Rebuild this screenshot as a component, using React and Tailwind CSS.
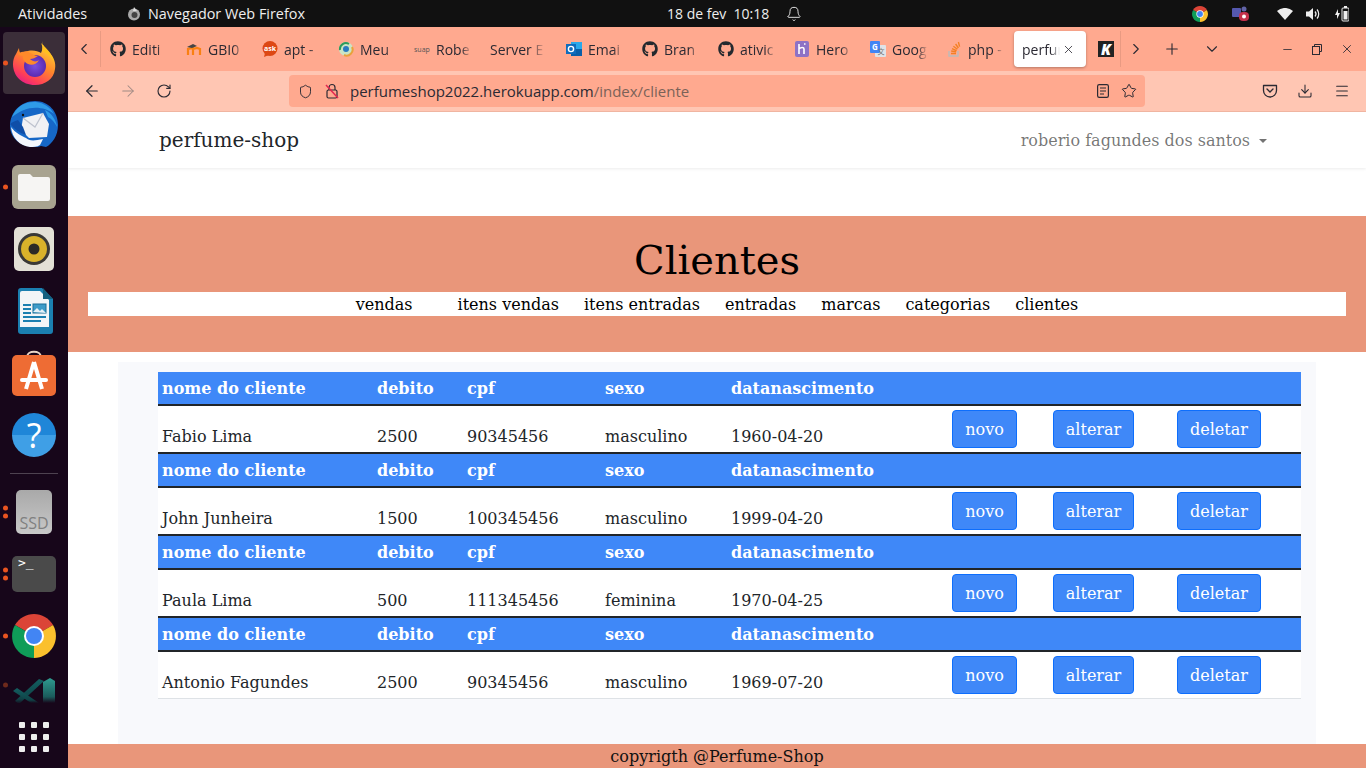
import React from "react";
import { FaGithub } from "react-icons/fa";
import { X, Plus, ChevronLeft, ChevronRight, ChevronDown, Minus, ArrowLeft, ArrowRight, RotateCw, Shield, Star, Download, Menu, Bell } from "lucide-react";

const Gh = () => <FaGithub size={16} className="text-[#24292e] shrink-0" />;
const Moodle = () => (
  <svg width="16" height="16" viewBox="0 0 16 16" className="shrink-0"><path d="M2 14V8l5-1v7M7 14V8l4-1 3 1v6" fill="none" stroke="#f98012" strokeWidth="2.2"/><path d="M1 6l6-3 4 2-5 2z" fill="#444"/></svg>
);
const Ask = () => (
  <svg width="16" height="16" viewBox="0 0 16 16" className="shrink-0"><circle cx="8" cy="7.5" r="7.5" fill="#dd4814"/><path d="M3 12l-1 4 5-2z" fill="#dd4814"/><text x="8" y="10" textAnchor="middle" fontSize="7" fontWeight="700" fill="#fff" fontFamily="Open Sans">ask</text></svg>
);
const Meu = () => (
  <svg width="16" height="16" viewBox="0 0 16 16" className="shrink-0"><circle cx="8" cy="8" r="7" fill="#cbe4c4"/><path d="M2 9a6 6 0 0 1 9-6" stroke="#2d9a5c" strokeWidth="2" fill="none"/><path d="M14 6a6 6 0 0 1-8 8" stroke="#e9a23b" strokeWidth="2" fill="none"/><circle cx="8" cy="8" r="3" fill="#2a7bc0"/></svg>
);
const Outlook = () => (
  <svg width="16" height="16" viewBox="0 0 16 16" className="shrink-0"><rect x="5" y="1" width="11" height="14" fill="#28a8ea"/><rect x="5" y="8" width="11" height="7" fill="#0a5fa8"/><rect y="3" width="10" height="10" fill="#0f6cbd"/><circle cx="5" cy="8" r="2.6" fill="none" stroke="#fff" strokeWidth="1.4"/></svg>
);
const Heroku = () => (
  <svg width="16" height="16" viewBox="0 0 16 16" className="shrink-0"><rect x="1" y="0" width="14" height="16" rx="2" fill="#8d72c5"/><path d="M5 3v10M5 8c2-2 5-2 5 0v5M10 3l1.5 0" stroke="#fff" strokeWidth="1.6" fill="none"/></svg>
);
const GoogleT = () => (
  <svg width="16" height="16" viewBox="0 0 16 16" className="shrink-0"><rect x="5" y="4" width="11" height="12" rx="1" fill="#dfe3e8"/><rect x="0" y="0" width="10" height="12" rx="1" fill="#4285f4"/><text x="5" y="9" textAnchor="middle" fontSize="8" fontWeight="700" fill="#fff" fontFamily="Open Sans">G</text><text x="11" y="13" textAnchor="middle" fontSize="7" fill="#777" fontFamily="Noto Sans CJK SC">文</text></svg>
);
const So = () => (
  <svg width="16" height="16" viewBox="0 0 16 16" className="shrink-0"><path d="M3 10v5h9v-5" stroke="#bcbbbb" strokeWidth="1.4" fill="none"/><path d="M5 12.5h5M5.2 10l5 .8M6 7.6l4.6 2M7.4 5.2l4 3M9.6 3l2.8 4M12.4 1l1.2 4.6" stroke="#f48024" strokeWidth="1.4" fill="none"/></svg>
);

const tabs = [
  { i: <Gh />, t: "Editi" },
  { i: <Moodle />, t: "GBI0" },
  { i: <Ask />, t: "apt -" },
  { i: <Meu />, t: "Meu" },
  { i: <span className="w-4 shrink-0 text-[7px] text-[#555] leading-none">suap</span>, t: "Robe" },
  { t: "Server E", plain: true },
  { i: <Outlook />, t: "Emai" },
  { i: <Gh />, t: "Bran" },
  { i: <Gh />, t: "ativic" },
  { i: <Heroku />, t: "Hero" },
  { i: <GoogleT />, t: "Goog" },
  { i: <So />, t: "php -", last: true },
];

const Tab = ({ i, t, plain, last }) => (
  <div className={"shrink-0 flex items-center gap-[6px] pl-[6px] overflow-hidden " + (last ? "w-[74px]" : "w-[76px]")}>
    {i}
    <span className={"whitespace-nowrap text-[14px] text-[#2b2a33] overflow-hidden [mask-image:linear-gradient(to_right,black_70%,transparent)] " + (plain ? "w-[56px]" : "w-[36px]")}>{t}</span>
  </div>
);

const Firefox = () => (
  <svg width="46" height="46" viewBox="0 0 46 46">
    <defs>
      <linearGradient id="ffa" x1="0.8" y1="0" x2="0.2" y2="1"><stop offset="0" stopColor="#ffdd3c"/><stop offset="0.45" stopColor="#ff8a2a"/><stop offset="0.8" stopColor="#ff3c5a"/><stop offset="1" stopColor="#e01a8e"/></linearGradient>
      <radialGradient id="ffb" cx="0.5" cy="0.5" r="0.5"><stop offset="0" stopColor="#7b4fe0"/><stop offset="1" stopColor="#5a2bb0"/></radialGradient>
    </defs>
    <path d="M31 1c1 5 3 8 7 11 5 5 7 11 6 17-1 10-10 16-20 16C11 45 2 36 2 24c0-4 1-7 3-10l3-6c0 3 1 5 2 6 2-2 5-3 7-3 5-1 10 0 13 2 2-4 2-8 1-12z" fill="url(#ffa)"/>
    <circle cx="24" cy="26" r="11" fill="url(#ffb)"/>
    <path d="M7 14c4-3 9-3 12-1 3 1 5 3 8 3-3 2-5 3-8 3 3 3 7 3 9 1-2 4-7 6-11 4-4-2-6-6-5-8-2 0-4-1-5-2z" fill="#ff8a2a"/>
    <path d="M30 3c5 5 12 11 13 20-3-7-8-10-12-12 1-3 0-6-1-8z" fill="#ffc01f"/>
  </svg>
);
const Thunderbird = () => (
  <svg width="50" height="50" viewBox="0 0 50 50">
    <path d="M1 26C1 12 12 1 26 1c14 0 23 11 23 24 0 11-6 19-12 22l-5-1c-2 1-5 1-7 1C12 47 1 38 1 26z" fill="#1667c7"/>
    <path d="M3 17C7 7 16 1 27 2c8 1 14 5 18 12-8-7-21-8-30-4-3 1-8 4-12 7z" fill="#2f9be8"/>
    <path d="M36 10c6 3 11 9 12 17-2-4-5-8-9-10z" fill="#2f9be8"/>
    <path d="M14 18l20-5 6 11-2 13-18 1-8-8z" fill="#f1f1f4"/>
    <path d="M14 18l12 9 8-14" fill="none" stroke="#bfc3cf" strokeWidth="1.2"/>
    <path d="M2 27c4 6 11 9 15 11 3 3 8 3 17 1l-3 6c-3 2-7 2-10 2C11 46 3 38 2 27z" fill="#f4f6fb"/>
    <path d="M1 24c4 5 10 9 16 11l-3-8-5-7c-3 1-6 2-8 4z" fill="#0f4ea8"/>
    <circle cx="14" cy="15" r="1.2" fill="#111"/>
  </svg>
);
const Files = () => (
  <div className="w-11 h-11 rounded-[6px] bg-[#a8a390] flex items-center justify-center">
    <svg width="32" height="28" viewBox="0 0 32 28"><path d="M0 3a2 2 0 0 1 2-2h10l3 3h15a2 2 0 0 1 2 2v20a2 2 0 0 1-2 2H2a2 2 0 0 1-2-2z" fill="#f6f5f3"/></svg>
  </div>
);
const Rhythm = () => (
  <div className="w-10 h-11 rounded-[5px] bg-[#e3e0d6] flex items-center justify-center">
    <svg width="34" height="34" viewBox="0 0 34 34"><circle cx="17" cy="17" r="16" fill="#3a3936"/><circle cx="17" cy="17" r="13" fill="#d9b22a"/><circle cx="17" cy="17" r="5.5" fill="#2c2a26"/></svg>
  </div>
);
const Writer = () => (
  <svg width="37" height="46" viewBox="0 0 37 46">
    <path d="M2 3a3 3 0 0 1 3-3h21l11 11v32a3 3 0 0 1-3 3H5a3 3 0 0 1-3-3z" fill="#1b7fb0"/>
    <path d="M4 5a2 2 0 0 1 2-2h18l9 9v27H4z" fill="#f2f5f7"/>
    <path d="M27 0l10 11-10 0z" fill="#14607f" />
    <rect x="7" y="16" width="8" height="2" fill="#1b7fb0"/><rect x="7" y="20" width="8" height="2" fill="#1b7fb0"/><rect x="7" y="24" width="8" height="2" fill="#1b7fb0"/>
    <rect x="7" y="28" width="23" height="2" fill="#1b7fb0"/><rect x="7" y="32" width="18" height="2" fill="#1b7fb0"/>
    <rect x="17" y="16" width="13" height="9" fill="#3d9bc8" stroke="#1b6f98"/>
    <path d="M17 24l4-4 3 3 2-2 4 4z" fill="#e6f1f7"/>
  </svg>
);
const Software = () => (
  <svg width="44" height="46" viewBox="0 0 44 46">
    <path d="M15 7C15 0 29 0 29 7" fill="none" stroke="#e8d6c8" strokeWidth="2"/>
    <rect x="0" y="5" width="44" height="41" rx="5" fill="#ee6c34"/>
    <path d="M22 12l-8 27M22 12l8 27" stroke="#fff" strokeWidth="4" fill="none"/>
    <rect x="8" y="28" width="28" height="4" rx="2" fill="#fff"/>
  </svg>
);
const Help = () => (
  <div className="w-11 h-11 rounded-full bg-[linear-gradient(#1f86d8_50%,#3f9fe6_50%)] flex items-center justify-center text-white text-[34px] leading-none font-['Open_Sans']">?</div>
);
const Ssd = () => (
  <div className="w-9 h-11 rounded-[5px] bg-[linear-gradient(#a9a9a9,#c8c8c8)] flex items-end justify-center text-[#808080] text-[16px] leading-[21px]">SSD</div>
);
const Term = () => (
  <div className="w-11 h-9 rounded-[5px] bg-[#4a4a4a] pl-[6px] text-white text-[13px] leading-[14px] font-['DejaVu_Sans_Mono'] self-center">&gt;_</div>
);
const Chrome = ({ s = 44 }) => (
  <svg width={s} height={s} viewBox="0 0 44 44">
    <path d="M22 22L3 11A22 22 0 0 1 41 11z" fill="#db4437"/>
    <path d="M22 22L41 11A22 22 0 0 1 22 44z" fill="#fbc02d"/>
    <path d="M22 22L22 44A22 22 0 0 1 3 11z" fill="#0f9d58"/>
    <circle cx="22" cy="22" r="10" fill="#fff"/><circle cx="22" cy="22" r="8" fill="#4285f4"/>
  </svg>
);
const Code = () => (
  <svg width="42" height="26" viewBox="0 0 42 26">
    <defs>
      <linearGradient id="cda" x1="0" y1="0" x2="0" y2="1"><stop offset="0" stopColor="#2f9c90"/><stop offset="0.75" stopColor="#1b5c5c"/><stop offset="1" stopColor="#17061a"/></linearGradient>
      <linearGradient id="cdb" x1="0" y1="0" x2="0" y2="1"><stop offset="0" stopColor="#135e60"/><stop offset="0.8" stopColor="#0f4347"/><stop offset="1" stopColor="#17061a"/></linearGradient>
    </defs>
    <path d="M31 4L6 27l-4-3 24-22z" fill="url(#cdb)" />
    <path d="M0 14l4-3 22 15h-8z" fill="url(#cdb)"/>
    <path d="M30 5l7-4 5 3v22H30z" fill="url(#cda)"/>
  </svg>
);
const Dots = ({ n, dim }) => (
  <span className="absolute left-[3px] top-1/2 -translate-y-1/2 flex flex-col gap-[3px]">
    {Array.from({ length: n }).map((_, k) => (
      <span key={k} className={"w-[5px] h-[5px] rounded-full " + (dim ? "bg-[#6e2a1c]" : "bg-[#e95420]")} />
    ))}
  </span>
);
const Slot = ({ children, n = 0, active, dim, clip }) => (
  <div className={"relative w-full shrink-0 flex justify-center " + (clip ? "h-[36px] items-start overflow-hidden pt-[10px]" : "h-[62px] items-center")}>
    {active && <div className="absolute inset-x-[3px] inset-y-0 rounded-[4px] bg-[#3b2e39]" />}
    {n > 0 && <Dots n={n} dim={dim} />}
    <div className="relative flex">{children}</div>
  </div>
);

const Dock = () => (
  <aside className="w-[68px] shrink-0 bg-[#17061a] flex flex-col items-center pt-[5px] overflow-hidden font-['Open_Sans']">
    <Slot n={1} active><Firefox /></Slot>
    <Slot><Thunderbird /></Slot>
    <Slot n={1}><Files /></Slot>
    <Slot><Rhythm /></Slot>
    <Slot><Writer /></Slot>
    <Slot><Software /></Slot>
    <Slot><Help /></Slot>
    <div className="w-full h-[15px] shrink-0 flex items-center justify-center"><div className="w-12 h-px bg-[#4e4250]" /></div>
    <Slot n={2}><Ssd /></Slot>
    <Slot n={2}><Term /></Slot>
    <Slot n={1}><Chrome /></Slot>
    <Slot n={1} dim clip><Code /></Slot>
    <div className="grid grid-cols-3 gap-[6px] mt-[19px]">
      {Array.from({ length: 9 }).map((_, k) => <span key={k} className="w-[6px] h-[6px] rounded-[1px] bg-[#eeeeee]" />)}
    </div>
  </aside>
);

const Speaker = () => (
  <svg width="16" height="16" viewBox="0 0 16 16" className="ml-[12px]"><path d="M1 5.5h3L8 2v12L4 10.5H1z" fill="#eee"/><path d="M10 5.5c1.2 1.4 1.2 3.6 0 5M12 3.5c2.3 2.5 2.3 6.5 0 9" fill="none" stroke="#eee" strokeWidth="1.2"/></svg>
);

const TopBar = () => (
  <div className="h-[27px] shrink-0 bg-[#111111] flex items-center text-[14.4px] text-[#eeeeee] font-['Open_Sans']">
    <span className="ml-[18px] w-[71px] whitespace-nowrap">Atividades</span>
    <svg width="14" height="14" viewBox="0 0 14 14" className="ml-[38px] shrink-0"><circle cx="7" cy="7.5" r="6" fill="#aaa"/><circle cx="7.5" cy="8" r="3" fill="#444"/><path d="M7 0l3 4-4 0z" fill="#ddd"/></svg>
    <span className="ml-[7px] w-[156px] whitespace-nowrap">Navegador Web Firefox</span>
    <span className="ml-[363px] w-[102px] whitespace-nowrap text-[14px]">18 de fev&nbsp;&nbsp;10:18</span>
    <Bell size={16} strokeWidth={1.4} className="ml-[17px]" />
    <div className="ml-auto flex items-center mr-[17px]">
      <Chrome s={16} />
      <svg width="18" height="16" viewBox="0 0 18 16" className="ml-[24px]"><circle cx="12" cy="3" r="2.5" fill="#6264a7"/><rect x="0" y="2" width="9" height="9" rx="1" fill="#5558af"/><rect x="7" y="6" width="10" height="9" rx="4" fill="#c4314b"/><circle cx="12" cy="10.5" r="2" fill="#fff"/></svg>
      <svg width="16" height="12" viewBox="0 0 16 12" className="ml-[27px]"><path d="M0 3a12 12 0 0 1 16 0L8 12z" fill="#eee"/></svg>
      <Speaker />
      <svg width="14" height="16" viewBox="0 0 14 16" className="ml-[14px]"><path d="M3 3L0 9h2v4l3-6H3z" fill="#eee"/><rect x="7" y="2" width="7" height="13" rx="1" fill="none" stroke="#eee"/><rect x="9" y="0" width="3" height="2" fill="#eee"/><rect x="8.5" y="5" width="4" height="8.5" fill="#eee"/></svg>
    </div>
  </div>
);

const TabBar = () => (
  <div className="h-[44px] shrink-0 bg-[#ffa98f] flex items-center text-[#2b2a33] font-['Open_Sans']">
    <div className="w-[33px] h-[36px] shrink-0 flex items-center justify-center border-r border-[#e99a82]"><ChevronLeft size={18} strokeWidth={1.5} /></div>
    <div className="flex items-center pl-[3px]">
      {tabs.map((t, k) => <Tab key={k} {...t} />)}
      <div className="w-[72px] h-[36px] rounded-[4px] bg-white shadow-[0_1px_3px_rgba(0,0,0,0.3)] flex items-center pl-[8px] shrink-0">
        <span className="w-[38px] overflow-hidden whitespace-nowrap text-[14px] [mask-image:linear-gradient(to_right,black_75%,transparent)]">perfume</span>
        <X size={13} strokeWidth={1.5} className="ml-[2px]" />
      </div>
      <div className="ml-[12px] w-4 h-4 bg-[#222] flex items-center justify-center text-white text-[15px] font-extrabold italic leading-none">K</div>
    </div>
    <div className="ml-[6px] h-[36px] w-px bg-[#e99a82]" />
    <ChevronRight size={18} strokeWidth={1.5} className="ml-[6px]" />
    <Plus size={18} strokeWidth={1.5} className="ml-[18px]" />
    <ChevronDown size={18} strokeWidth={1.5} className="ml-[22px]" />
    <Minus size={13} strokeWidth={1.5} className="ml-[60px]" />
    <svg width="12" height="12" viewBox="0 0 12 12" className="ml-[17px]" fill="none" stroke="#2b2a33"><rect x="1.5" y="3.5" width="7" height="8"/><path d="M3.5 3.5v-2h7v7h-2"/></svg>
    <X size={14} strokeWidth={1.5} className="ml-[17px]" />
  </div>
);

const Pocket = () => (
  <svg width="16" height="16" viewBox="0 0 16 16" fill="none" stroke="#2b2a33" strokeWidth="1.3"><path d="M1.5 2.5h13v5a6.5 6.5 0 0 1-13 0z" strokeLinejoin="round"/><path d="M5 6l3 3 3-3" strokeLinecap="round"/></svg>
);
const LockOff = () => (
  <svg width="16" height="16" viewBox="0 0 16 16" fill="none" className="shrink-0"><rect x="3" y="7" width="10" height="8" rx="1.5" stroke="#2b2a33" strokeWidth="1.2"/><path d="M5 7V4.5a3 3 0 0 1 6 0V7" stroke="#2b2a33" strokeWidth="1.2"/><path d="M2 2l12 13" stroke="#e22850" strokeWidth="1.5"/></svg>
);
const Reader = () => (
  <svg width="14" height="16" viewBox="0 0 14 16" fill="none" stroke="#2b2a33" strokeWidth="1.2" className="ml-auto shrink-0"><rect x="1.6" y="1.6" width="10.8" height="12.8" rx="1.6"/><path d="M4 5h6M4 8h6M4 11h4"/></svg>
);

const ToolBar = () => (
  <div className="h-[41px] shrink-0 bg-[#ffc6b3] flex items-center text-[#2b2a33] font-['Open_Sans'] border-b border-[#f0b5a1]">
    <ArrowLeft size={18} strokeWidth={1.6} className="ml-[15px]" />
    <ArrowRight size={18} strokeWidth={1.4} className="ml-[18px] text-[#a08a84]" />
    <RotateCw size={16} strokeWidth={1.7} className="ml-[19px]" />
    <div className="ml-[117px] w-[856px] h-[32px] rounded-[4px] bg-[#ffa98f] flex items-center pl-[9px] pr-[8px]">
      <Shield size={15} strokeWidth={1.5} />
      <span className="ml-[11px]"><LockOff /></span>
      <span className="ml-[10px] text-[15px] whitespace-nowrap">perfumeshop2022.herokuapp.com<span className="text-[#7b6258]">/index/cliente</span></span>
      <Reader />
      <Star size={16} strokeWidth={1.5} className="ml-[11px]" />
    </div>
    <span className="ml-[117px]"><Pocket /></span>
    <Download size={16} strokeWidth={1.6} className="ml-[19px]" />
    <Menu size={16} strokeWidth={1.6} className="ml-[21px]" />
  </div>
);

const cols = ["w-[215px]", "w-[90px]", "w-[138px]", "w-[126px]"];
const Cell = ({ c, children }) => <div className={c + " shrink-0 pl-1"}>{children}</div>;

const Btn = ({ children, cls }) => (
  <button className={"h-[38px] rounded-[4px] border border-[#0d6efd] bg-[#3f88f8] text-white text-[16px] pt-[2px] " + cls}>{children}</button>
);

const Head = () => (
  <div className="h-[34px] bg-[#3f88f8] border-b-2 border-[#212529] flex items-center font-bold text-white text-[16px] leading-[24px] pt-[2px]">
    <Cell c={cols[0]}>nome do cliente</Cell>
    <Cell c={cols[1]}>debito</Cell>
    <Cell c={cols[2]}>cpf</Cell>
    <Cell c={cols[3]}>sexo</Cell>
    <Cell c="w-[180px]">datanascimento</Cell>
  </div>
);
const Row = ({ d, last }) => (
  <>
    <Head />
    <div className={"flex bg-white text-[#212529] text-[16px] " + (last ? "h-[47px] border-b border-[#dee2e6]" : "h-[48px] border-b-2 border-[#212529]")}>
      <div className="flex items-end w-[569px] shrink-0 pb-[3px] leading-[24px]">
        <Cell c={cols[0]}>{d[0]}</Cell>
        <Cell c={cols[1]}>{d[1]}</Cell>
        <Cell c={cols[2]}>{d[2]}</Cell>
        <Cell c={cols[3]}>{d[3]}</Cell>
        <Cell c="w-0 whitespace-nowrap">{d[4]}</Cell>
      </div>
      <div className="flex items-start pt-1 pl-[225px]">
        <Btn cls="w-[65px] shrink-0">novo</Btn>
        <Btn cls="w-[81px] ml-[36px] shrink-0">alterar</Btn>
        <Btn cls="w-[84px] ml-[43px] shrink-0">deletar</Btn>
      </div>
    </div>
  </>
);

const data = [
  ["Fabio Lima", "2500", "90345456", "masculino", "1960-04-20"],
  ["John Junheira", "1500", "100345456", "masculino", "1999-04-20"],
  ["Paula Lima", "500", "111345456", "feminina", "1970-04-25"],
  ["Antonio Fagundes", "2500", "90345456", "masculino", "1969-07-20"],
];
const links = ["itens vendas", "itens entradas", "entradas", "marcas", "categorias", "clientes"];

const Page = () => (
  <div className="flex-1 flex flex-col bg-white overflow-hidden text-[#000] text-[16px] font-['DejaVu_Serif',serif]">
    <nav className="h-[56px] shrink-0 flex items-center justify-between pl-[91px] pr-[99px] shadow-[0_1px_3px_rgba(0,0,0,0.08)] relative">
      <span className="text-[20px] text-[#212529]">perfume-shop</span>
      <span className="flex items-center text-[rgba(0,0,0,0.55)] pt-[2px]">
        roberio fagundes dos santos
        <span className="ml-[9px] w-0 h-0 border-x-[4px] border-x-transparent border-t-[4px] border-t-[rgba(0,0,0,0.55)]" />
      </span>
    </nav>
    <div className="h-[48px] shrink-0" />
    <header className="h-[136px] shrink-0 bg-[#e9967a] px-[20px] pt-[14px] flex flex-col items-center">
      <h1 className="text-[40px] leading-[60px] h-[62px] text-black">Clientes</h1>
      <div className="w-full h-[24px] bg-white flex items-center justify-center gap-[25px] leading-[24px] pt-[2px]">
        <span className="mr-[20px]">vendas</span>
        {links.map(l => <span key={l}>{l}</span>)}
      </div>
    </header>
    <main className="flex-1 mx-[50px] mt-[10px] bg-[#f8f9fc] pt-[10px] px-[40px] pr-[15px] min-h-0">
      {data.map((d, k) => <Row key={k} d={d} last={k === 3} />)}
    </main>
    <footer className="h-[24px] shrink-0 bg-[#e9967a] text-center text-[16px] leading-[26px] text-[#111]">copyrigth @Perfume-Shop</footer>
  </div>
);

export default function App() {
  return (
    <div className="w-[1366px] h-[768px] overflow-hidden flex flex-col">
      <TopBar />
      <div className="flex-1 flex min-h-0">
        <Dock />
        <div className="flex-1 flex flex-col min-w-0">
          <TabBar />
          <ToolBar />
          <Page />
        </div>
      </div>
    </div>
  );
}
